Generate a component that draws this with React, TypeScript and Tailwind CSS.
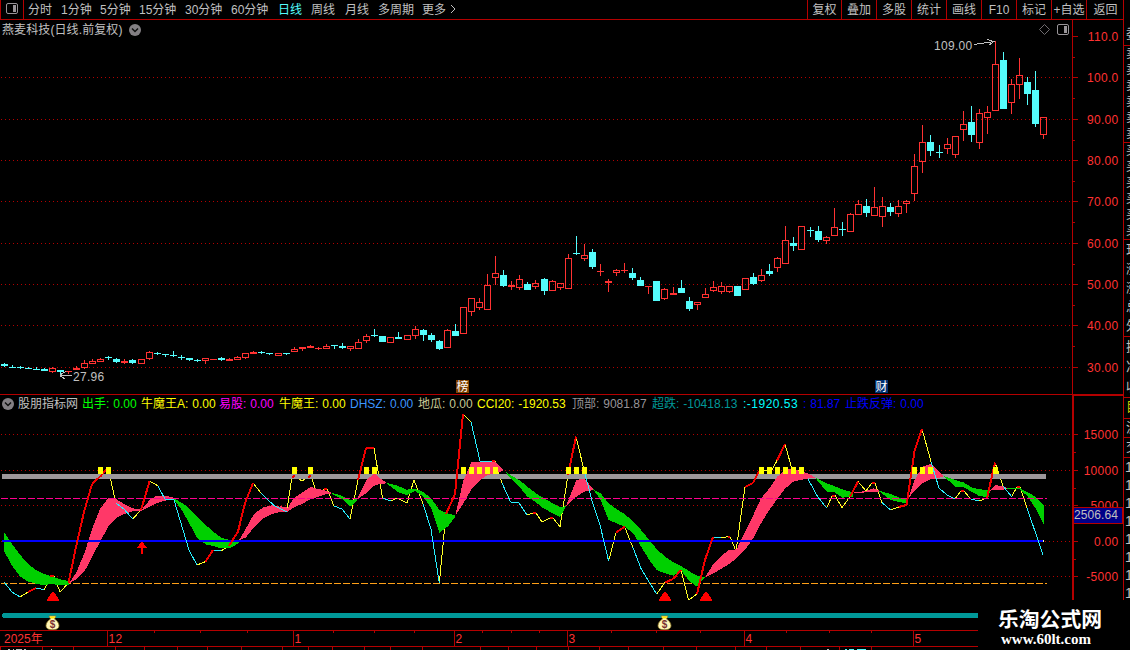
import React from "react";

type Candle = [x: number, high: number, top: number, bottom: number, low: number, up: 0 | 1];

const UP = "#ff3232";
const DOWN = "#54fcfc";
const LINE = "#b40000";
const TXT = "#c0c0c0";

const candles: Candle[] = [
  [4, 363, 364, 366, 367, 0], [12, 365, 367, 368, 368, 0], [20, 366, 367, 368, 369, 0], [28, 367, 368, 369, 369, 0],
  [36, 367, 369, 370, 370, 0], [44, 368, 369, 371, 371, 0], [52, 367, 368, 372, 373, 1], [60, 370, 370, 372, 374, 0],
  [68, 371, 371, 372, 374, 1], [76, 366, 368, 370, 370, 1], [84, 360, 363, 368, 369, 1], [92, 359, 361, 364, 364, 1],
  [100, 358, 359, 362, 362, 1], [108, 356, 357, 358, 360, 0], [116, 358, 359, 362, 363, 0], [124, 359, 361, 363, 364, 1],
  [132, 359, 360, 363, 364, 0], [141, 359, 359, 364, 364, 1], [149, 351, 352, 359, 360, 1], [157, 352, 353, 354, 355, 0],
  [165, 354, 354, 355, 357, 0], [173, 351, 355, 356, 357, 0], [181, 355, 357, 358, 360, 0], [189, 358, 358, 360, 361, 0],
  [197, 359, 360, 361, 362, 0], [205, 358, 358, 361, 364, 1], [213, 359, 359, 360, 360, 1], [221, 357, 358, 360, 361, 0],
  [229, 358, 359, 361, 361, 1], [237, 356, 357, 360, 360, 1], [245, 353, 353, 358, 359, 1], [253, 351, 352, 354, 354, 1],
  [261, 351, 352, 353, 354, 0], [269, 353, 353, 354, 355, 0], [278, 353, 353, 356, 356, 1], [286, 353, 353, 354, 355, 0],
  [294, 347, 349, 352, 352, 1], [302, 347, 347, 349, 351, 1], [310, 345, 346, 348, 348, 1], [318, 347, 348, 349, 350, 1],
  [326, 344, 346, 349, 349, 1], [334, 345, 345, 346, 349, 0], [342, 343, 346, 348, 349, 0], [350, 346, 346, 349, 351, 1],
  [358, 339, 342, 349, 349, 1], [366, 334, 336, 341, 343, 1], [374, 329, 335, 336, 337, 0], [382, 336, 336, 342, 342, 0],
  [390, 337, 337, 343, 343, 1], [398, 332, 337, 339, 339, 0], [407, 335, 335, 340, 340, 1], [415, 326, 329, 336, 339, 1],
  [423, 329, 330, 335, 341, 0], [431, 333, 335, 340, 342, 0], [439, 340, 341, 349, 350, 0], [447, 329, 330, 348, 348, 1],
  [455, 324, 331, 336, 336, 0], [463, 307, 307, 334, 334, 1], [471, 298, 298, 312, 316, 1], [479, 298, 302, 308, 310, 1],
  [487, 274, 285, 310, 310, 1], [495, 256, 273, 278, 285, 1], [503, 270, 275, 286, 287, 0], [511, 281, 285, 287, 290, 1],
  [519, 275, 279, 288, 290, 1], [527, 282, 284, 290, 290, 0], [535, 280, 283, 287, 289, 1], [544, 278, 279, 291, 295, 0],
  [552, 280, 281, 291, 291, 1], [560, 283, 283, 288, 290, 1], [568, 254, 258, 289, 289, 1], [576, 236, 253, 254, 255, 0],
  [584, 244, 255, 259, 261, 1], [592, 249, 252, 267, 269, 0], [600, 264, 271, 272, 276, 1], [608, 279, 281, 283, 292, 1],
  [616, 269, 270, 273, 276, 1], [624, 263, 270, 271, 273, 1], [632, 268, 273, 278, 280, 0], [640, 277, 280, 286, 286, 0],
  [648, 286, 286, 287, 294, 1], [656, 281, 281, 301, 301, 0], [664, 288, 289, 299, 300, 1], [673, 287, 293, 295, 295, 1],
  [681, 280, 288, 293, 293, 0], [689, 297, 301, 309, 311, 0], [697, 302, 302, 305, 310, 1], [705, 288, 294, 298, 298, 1],
  [713, 281, 287, 291, 292, 1], [721, 282, 286, 292, 294, 1], [729, 286, 286, 292, 293, 1], [737, 286, 286, 296, 296, 0],
  [745, 278, 278, 290, 290, 1], [753, 273, 277, 284, 285, 0], [761, 269, 275, 281, 282, 1], [769, 264, 271, 274, 276, 0],
  [777, 257, 258, 268, 272, 1], [785, 226, 240, 264, 264, 1], [793, 237, 243, 246, 251, 0], [801, 226, 226, 250, 250, 1],
  [810, 227, 230, 231, 237, 0], [818, 226, 231, 240, 242, 0], [826, 236, 237, 241, 244, 1], [834, 208, 227, 236, 236, 1],
  [842, 222, 229, 230, 236, 0], [850, 213, 214, 232, 232, 1], [858, 200, 204, 215, 215, 1], [866, 199, 206, 213, 217, 0],
  [874, 187, 207, 216, 216, 1], [882, 197, 206, 217, 227, 1], [890, 203, 207, 212, 216, 0], [898, 200, 206, 214, 217, 1],
  [906, 200, 201, 204, 213, 1], [914, 154, 166, 194, 201, 1], [922, 125, 142, 162, 173, 1], [930, 135, 142, 151, 156, 0],
  [939, 145, 152, 153, 158, 0], [947, 138, 144, 149, 154, 1], [955, 136, 136, 155, 158, 1], [963, 111, 124, 130, 141, 1],
  [971, 106, 122, 135, 142, 0], [979, 109, 113, 143, 149, 1], [987, 106, 112, 118, 134, 1], [995, 41, 64, 111, 111, 1],
  [1003, 52, 60, 109, 109, 0], [1011, 79, 84, 103, 114, 1], [1019, 58, 75, 85, 99, 1], [1027, 77, 82, 94, 105, 0],
  [1035, 71, 90, 124, 127, 0], [1043, 117, 117, 135, 139, 1],
];

function CandleShape({ c }: { c: Candle }) {
  const [x, high, top, bottom, low, up] = c;
  const color = up ? UP : DOWN;
  const hollow = up === 1 && bottom - top > 2;
  return (
    <g fill={color}>
      {top > high && <rect x={x} y={high} width={1} height={top - high} />}
      {low > bottom && <rect x={x} y={bottom} width={1} height={low - bottom} />}
      {hollow ? (
        <rect x={x - 2.5} y={top + 0.5} width={6} height={bottom - top - 1} fill="none" stroke={color} />
      ) : (
        <rect x={x - 3} y={top} width={7} height={bottom - top} />
      )}
    </g>
  );
}

type Tone = "y" | "c" | "r";
// Each entry is a vertex plus the tone of the segment that ends there.
const cci: [number, number, Tone][] = [
  [4, 582, "c"], [12, 592, "c"], [20, 597, "c"], [28, 592, "y"], [36, 588, "r"], [44, 589.5, "c"], [48, 583, "y"],
  [50, 576, "y"], [54, 576, "r"], [57, 584, "y"], [60, 592, "y"], [68.5, 583, "y"], [76, 547, "r"], [84, 512, "r"], [92, 484, "r"],
  [101, 475.7, "r"], [107, 469, "r"], [110.6, 479, "y"], [115.7, 503, "y"], [124, 509, "c"], [132.6, 519, "c"],
  [141, 510, "y"], [149.6, 481, "r"], [157.6, 485.6, "y"], [165, 499, "c"], [174, 500, "c"], [189, 550, "c"],
  [197, 565, "c"], [205.6, 561.6, "y"], [213, 550, "r"], [221, 551, "c"], [229, 546, "y"], [238, 531.6, "r"],
  [245, 503, "r"], [253, 483, "r"], [261, 493, "y"], [274, 505.6, "c"], [286.6, 512, "c"], [292, 477, "y"],
  [295, 476, "r"], [302, 481, "y"], [308, 477, "y"], [311, 476, "r"], [318, 497, "y"], [324, 489, "y"], [327, 489, "r"],
  [334, 506, "y"], [342, 509, "c"], [350, 519, "c"], [358, 480, "y"], [366, 448, "r"], [374, 448, "r"],
  [382.6, 498, "y"], [390.6, 501, "c"], [397, 498, "y"], [407, 503, "y"], [414, 480, "y"], [423, 504, "y"],
  [431, 529, "c"], [439.3, 583, "c"], [446, 514, "y"], [455, 494, "r"], [463, 414, "r"], [471, 422, "y"],
  [480, 461, "c"], [492, 461, "c"], [495, 461, "r"], [502, 483, "y"], [510.6, 502, "c"], [519, 503, "c"],
  [527, 515, "c"], [533, 513, "y"], [536, 513, "r"], [542, 522, "y"], [550, 518, "y"], [553, 518, "r"], [560, 526.6, "y"],
  [568, 475, "y"], [576, 436.6, "r"], [584, 470, "y"], [592.6, 503, "c"], [600, 525, "c"], [608.6, 561, "c"],
  [616, 532.6, "y"], [624.6, 526.6, "r"], [632.6, 546.6, "y"], [641, 568.6, "c"], [656.6, 594, "c"], [665, 582.6, "y"],
  [673, 579, "r"], [681, 570, "r"], [688.6, 600, "y"], [697, 594, "y"], [705, 560, "r"], [713, 537, "r"],
  [721, 538, "c"], [728, 536.6, "y"], [730, 537, "r"], [736, 551, "y"], [745, 487, "y"], [753, 483, "r"],
  [759, 471, "r"], [772, 470, "y"], [777, 460.6, "y"], [785, 444, "r"], [792.6, 471.6, "y"], [801, 470, "y"],
  [808, 479, "y"], [817.6, 496.6, "c"], [826.6, 508, "c"], [832, 496, "y"], [835, 495.6, "r"], [842, 507.6, "y"],
  [850, 496.6, "y"], [858, 481.6, "r"], [866, 491, "y"], [872, 483, "y"], [875, 483, "r"], [882, 502.6, "y"],
  [890.6, 510, "c"], [898.6, 507, "y"], [906.6, 505, "r"], [914.6, 450.6, "r"], [922, 429, "r"], [931, 461.6, "y"],
  [939, 488, "c"], [947, 495, "c"], [955, 499, "c"], [961, 491, "y"], [964, 491, "r"], [970.6, 499, "y"],
  [979, 501, "c"], [987, 498, "y"], [995, 462.6, "r"], [1003, 486, "y"], [1011.6, 496.6, "c"], [1017, 487, "y"],
  [1020, 487, "r"], [1027, 508, "y"], [1043, 554.6, "c"],
];

const toneColor: Record<Tone, string> = { y: "#ffff28", c: "#28f0ff", r: "#f00000" };

function Segments({ tone }: { tone: Tone }) {
  const d = cci
    .slice(1)
    .map(([x, y, t], i) => (t === tone ? `M${cci[i][0]} ${cci[i][1]}L${x} ${y}` : ""))
    .join("");
  return <path d={d} fill="none" stroke={toneColor[tone]} strokeWidth={tone === "r" ? 2 : 1} />;
}

// Ribbons are stored in third-pixel units relative to an origin: [x, upper edge, lower edge].
type Ribbon = { o: [number, number]; rise: boolean; p: [number, number, number][] };
const A: [number, number] = [0, 410];
const B: [number, number] = [280, 400];
const C: [number, number] = [550, 400];
const D: [number, number] = [830, 400];
const ribbons: Ribbon[] = [
  { o: A, rise: false, p: [[13, 368, 425], [37, 403, 468], [61, 435, 500], [85, 463, 515], [108, 480, 521], [132, 492, 526], [150, 498, 522], [180, 508, 525], [207, 513, 524]] },
  { o: A, rise: true, p: [[207, 520, 520], [229, 487, 508], [253, 430, 485], [277, 355, 440], [300, 297, 395], [325, 263, 350], [347, 267, 325], [373, 282, 312], [398, 295, 304], [425, 299, 302], [449, 270, 290], [470, 257, 280], [495, 257, 272], [522, 263, 268]] },
  { o: A, rise: false, p: [[522, 266, 269], [545, 278, 300], [568, 295, 340], [592, 320, 385], [617, 345, 403], [640, 365, 408], [664, 383, 415], [688, 390, 415], [716, 392, 400]] },
  { o: A, rise: true, p: [[716, 392, 392], [738, 355, 382], [762, 312, 352], [790, 292, 325], [815, 286, 312], [840, 290, 306], [862, 292, 304]] },
  { o: B, rise: true, p: [[0, 318, 337], [22, 325, 335], [43, 293, 322], [70, 275, 310], [92, 261, 297], [115, 267, 290], [137, 272, 283], [155, 278, 280]] },
  { o: B, rise: false, p: [[155, 278, 281], [187, 288, 297], [211, 300, 320], [232, 297, 300]] },
  { o: B, rise: true, p: [[232, 297, 297], [259, 240, 280], [283, 220, 257], [300, 235, 252], [320, 248, 250]] },
  { o: B, rise: false, p: [[320, 249, 250], [352, 257, 275], [380, 269, 286], [406, 266, 273], [430, 276, 290], [454, 295, 325], [478, 330, 398], [503, 340, 380], [526, 347, 350]] },
  { o: B, rise: true, p: [[526, 347, 347], [549, 245, 312], [574, 187, 268], [600, 187, 240], [622, 187, 225], [647, 186, 220], [670, 208, 212]] },
  { o: B, rise: false, p: [[670, 210, 210], [695, 228, 237], [718, 240, 260], [742, 260, 290], [765, 278, 305], [790, 294, 325], [815, 308, 338], [840, 322, 352], [858, 318, 318]] },
  { o: C, rise: true, p: [[48, 318, 318], [79, 240, 290], [103, 235, 275], [130, 268, 270]] },
  { o: C, rise: false, p: [[130, 268, 268], [152, 280, 300], [176, 310, 360], [200, 328, 370], [224, 342, 380], [250, 365, 400], [273, 390, 440], [298, 420, 480], [320, 447, 510], [345, 470, 520], [370, 487, 527], [393, 498, 512], [420, 515, 545], [441, 527, 560], [465, 532, 532]] },
  { o: C, rise: true, p: [[465, 532, 532], [490, 492, 520], [513, 468, 507], [537, 450, 492], [560, 448, 475], [585, 395, 450], [610, 345, 415], [633, 295, 370], [658, 265, 330], [682, 230, 297], [706, 208, 265], [730, 208, 245], [752, 213, 240], [778, 222, 235], [795, 233, 233]] },
  { o: C, rise: false, p: [[795, 233, 233], [830, 250, 275], [852, 258, 276], [877, 268, 293], [910, 278, 290]] },
  { o: D, rise: true, p: [[68, 278, 280], [108, 273, 277], [132, 265, 276], [147, 272, 275]] },
  { o: D, rise: false, p: [[147, 272, 274], [182, 282, 300], [206, 292, 306], [230, 297, 310]] },
  { o: D, rise: true, p: [[235, 295, 295], [254, 240, 272], [277, 200, 250], [303, 192, 237], [320, 208, 235], [340, 228, 230]] },
  { o: D, rise: false, p: [[340, 228, 228], [376, 240, 260], [400, 247, 262], [425, 262, 275], [448, 268, 288], [475, 270, 292], [480, 272, 272]] },
  { o: D, rise: true, p: [[480, 272, 272], [495, 255, 270], [520, 260, 269], [532, 264, 267]] },
  { o: D, rise: false, p: [[532, 264, 267], [568, 263, 268], [592, 277, 288], [617, 290, 325], [641, 315, 372]] },
];

function ribbonPoints({ o, p }: Ribbon) {
  const at = (x: number, y: number) => `${(o[0] + x / 3).toFixed(2)},${(o[1] + y / 3).toFixed(2)}`;
  return [...p.map(([x, t]) => at(x, t)), ...p.slice().reverse().map(([x, , b]) => at(x, b))].join(" ");
}

const squares = [98, 106, 292, 308, 364, 372, 461, 469, 477, 485, 493, 566, 574, 582, 759, 767, 775, 783, 791, 799, 912, 920, 928, 993];
const priceTicks: [number, string][] = [[36, "110.0"], [77, "100.0"], [119, "90.00"], [160, "80.00"], [201, "70.00"], [243, "60.00"], [284, "50.00"], [325, "40.00"], [367, "30.00"]];
const cciTicks: [number, string][] = [[434, "15000"], [470, "10000"], [505, "5000"], [541, "0.00"], [576, "-5000"]];

const num = "font-['Liberation_Sans'] text-[12px] [letter-spacing:0.3px]";

function GridLine({ y }: { y: number }) {
  return <path d={`M1 ${y + 0.5}H1072`} stroke={LINE} strokeDasharray="1 3" />;
}

function AxisLabel({ y, children }: { y: number; children: string }) {
  return (
    <text x={1118.5} y={y + 5} textAnchor="end" fill={UP} className={num}>
      {children}
    </text>
  );
}

function PriceChart() {
  return (
    <svg className="block h-[374px] w-[1123px]" viewBox="0 20 1123 374" shapeRendering="crispEdges">
      {priceTicks.slice(1).map(([y]) => <GridLine key={y} y={y} />)}
      {candles.map((c) => <CandleShape key={c[0]} c={c} />)}
      <rect x={1072} y={20} width={1} height={374} fill={LINE} />
      {priceTicks.map(([y, label], i) => (
        <g key={y}>
          <rect x={1073} y={y} width={5} height={1} fill={LINE} />
          {i < 8 && <rect x={1073} y={y + 21} width={2} height={1} fill={LINE} />}
          <AxisLabel y={y}>{label}</AxisLabel>
        </g>
      ))}
      <text x={934} y={50} fill={TXT} className={num}>109.00</text>
      <path d="M974 44.5L994 41.5M987 39.5L994 41.5L989 45" fill="none" stroke={TXT} />
      <text x={73} y={381} fill={TXT} className={num}>27.96</text>
      <path d="M60 375.500H72M66 371.500L60.500 374.500V376L65 379" fill="none" stroke={TXT} />
      <rect x={456} y={380} width={13} height={13} fill="#804000" />
      <text x={456.500} y={391} fill="#fff" className="font-['Noto_Sans_CJK_SC'] text-[12px]">榜</text>
      <rect x={875} y={380} width={13} height={13} fill="#003070" />
      <text x={875.500} y={391} fill="#fff" className="font-['Noto_Sans_CJK_SC'] text-[12px]">财</text>
    </svg>
  );
}

function MoneyBag({ x }: { x: number }) {
  return (
    <g transform={`translate(${x} 615)`} shapeRendering="auto">
      <path d="M3 1H10L8.500 4C11 5.500 13 8 13 10.500C13 13.500 10.500 14.800 6.500 14.800S0 13.500 0 10.500C0 8 2 5.500 4.500 4Z" fill="#fff6b8" stroke="#8a7420" strokeWidth={0.8} />
      <path d="M3.500 1.500H9.500L8 3.500H5Z" fill="#ffe800" />
      <text x={6.500} y={13} textAnchor="middle" fill="#7a3030" className="font-['Liberation_Sans'] text-[10px] font-bold">$</text>
    </g>
  );
}

function IndicatorChart() {
  return (
    <svg className="block h-[235px] w-[1124px]" viewBox="0 395 1124 235" shapeRendering="crispEdges">
      {cciTicks.map(([y]) => <GridLine key={y} y={y} />)}
      <Segments tone="y" />
      <path d="M2 474.500H1045V478.500H2Z" fill="#9c979b" stroke="#9c979b" />
      <path d="M1 583.500H1047" stroke="#ffa018" strokeDasharray="7 2" />
      {ribbons.map((r, i) => <polygon key={i} points={ribbonPoints(r)} fill={r.rise ? "#ff3868" : "#00d000"} />)}
      <path d="M1 498.500H1047" stroke="#ff0090" strokeDasharray="7 2" />
      <rect x={2} y={540} width={1041} height={2} fill="#0000ff" />
      <rect x={1043} y={540} width={1} height={2} fill="#ffffa0" />
      <Segments tone="c" />
      <Segments tone="r" />
      {squares.map((x) => <rect key={x} x={x} y={467} width={5} height={7} fill="#ffff00" />)}
      {[47, 659, 700].map((x) => <path key={x} d={`M${x + 5} 592H${x + 7}L${x + 12} 599.500V601H${x}V599.500Z`} fill="#ff0000" />)}
      <path d="M142 541.500L147 547.500H143V553.500H141V547.500H137Z" fill="#ff0000" />
      <path d="M2 614H3V613H978V618H3V617H2Z" fill="#009898" />
      <MoneyBag x={46} />
      <MoneyBag x={658} />
      <path d="M1072 395H1124V396H1074V600H1072Z" fill={LINE} />
      {cciTicks.map(([y, label], i) => (
        <g key={y}>
          <rect x={1074} y={y} width={4} height={1} fill={LINE} />
          {i < 4 && <rect x={1074} y={y + 18} width={2} height={1} fill={LINE} />}
          <AxisLabel y={y}>{label}</AxisLabel>
        </g>
      ))}
      <rect x={1074} y={507} width={49} height={17} fill={LINE} />
      <rect x={1074} y={508} width={48} height={15} fill="#000088" />
      <text x={1074} y={519} fill={TXT} className="font-['Liberation_Sans'] text-[12px] [letter-spacing:0.1px]">2506.64</text>
    </svg>
  );
}

const legend: [string, string, string][] = [
  ["股朋指标网", "w-[64px]", "text-[#c0c0c0]"],
  ["出手: 0.00", "w-[59px]", "text-[#00ff00]"],
  ["牛魔王A: 0.00", "w-[78px]", "text-[#ffff00]"],
  ["易股: 0.00", "w-[60px]", "text-[#ff00ff]"],
  ["牛魔王: 0.00", "w-[71px]", "text-[#ffff00]"],
  ["DHSZ: 0.00", "w-[68px]", "text-[#3c96ff]"],
  ["地瓜: 0.00", "w-[59px]", "text-[#c8c896]"],
  ["CCI20: -1920.53", "w-[95px]", "text-[#ffff00]"],
  ["顶部: 9081.87", "w-[80px]", "text-[#989498]"],
  ["超跌: -10418.13", "w-[91px]", "text-[#009898]"],
  [":-1920.53", "w-[60px] tracking-[0.5px]", "text-[#00ffff]"],
  [": 81.87", "w-[42px]", "text-[#0000ff]"],
  ["止跌反弹: 0.00", "w-[90px]", "text-[#0000ff]"],
];

const periods: [string, string][] = [
  ["分时", "w-[33px]"], ["1分钟", "w-[39px]"], ["5分钟", "w-[39px]"], ["15分钟", "w-[46px]"], ["30分钟", "w-[46px]"],
  ["60分钟", "w-[47px]"], ["日线", "w-[33px]"], ["周线", "w-[34px]"], ["月线", "w-[33px]"], ["多周期", "w-[44px]"], ["更多", "w-[28px]"],
];

const tools: [string, string][] = [
  ["复权", "w-[34px]"], ["叠加", "w-[35px]"], ["多股", "w-[35px]"], ["统计", "w-[35px]"], ["画线", "w-[35px]"],
  ["F10", "w-[35px]"], ["标记", "w-[35px]"], ["+自选", "w-[35px]"], ["返回", "w-[38px]"],
];

function PanelIcon() {
  return (
    <svg className="block h-[11px] w-[12px] shrink-0" viewBox="0 0 12 11">
      <rect x={0.5} y={0.5} width={11} height={10} rx={1.5} fill="none" stroke="#989498" />
      <rect x={7} y={2} width={3} height={7} fill="#989498" />
    </svg>
  );
}

function RoundChevron() {
  return (
    <svg className="block h-[12px] w-[12px] shrink-0" viewBox="0 0 12 12">
      <circle cx={6} cy={6} r={6} fill="#848084" />
      <path d="M3 4.500L6 7.500L9 4.500" fill="none" stroke="#101010" strokeWidth={1.5} />
    </svg>
  );
}

function TopBar() {
  return (
    <header className="flex h-[20px] w-[1124px] border-b border-[#b40000]">
      <div className="flex w-[24px] items-center justify-center border-x border-[#b40000] pb-[2px]">
        <PanelIcon />
      </div>
      <nav className="flex grow items-center pt-[1px] pl-[4px]">
        {periods.map(([label, w]) => (
          <span key={label} className={`${w} ${label === "日线" ? "text-[#54fcfc]" : ""}`}>{label}</span>
        ))}
        <svg className="mb-[2px] h-[10px] w-[6px]" viewBox="0 0 6 10">
          <path d="M1 1L5 5L1 9" fill="none" stroke={TXT} />
        </svg>
      </nav>
      {tools.map(([label, w]) => (
        <span key={label} className={`${w} flex shrink-0 items-center justify-center border-l border-[#b40000] pt-[1px]`}>{label}</span>
      ))}
    </header>
  );
}

const months: [number, string][] = [[107, "12"], [293, "1"], [454, "2"], [567, "3"], [744, "4"], [913, "5"]];
const weekTicks = [154, 200, 247, 333, 374, 414, 482, 511, 539, 611, 656, 700, 786, 829, 871];
const footTicks = [0, 42, 73, 115, 144, 177, 207, 241, 282, 308, 332, 364, 390, 422, 480, 508, 536, 568, 599, 628, 663, 696, 735, 766, 800, 839, 871];

function TimeAxis() {
  return (
    <svg className="block h-[20px] w-[978px]" viewBox="0 630 978 20" shapeRendering="crispEdges">
      <rect x={0} y={630} width={978} height={1} fill={LINE} />
      <rect x={0} y={646} width={978} height={1} fill={LINE} />
      <text x={4} y={643} fill={UP} className="font-['Liberation_Sans','Noto_Sans_CJK_SC'] text-[12px]">2025年</text>
      {months.map(([x, m]) => (
        <g key={x}>
          <rect x={x} y={630} width={1} height={16} fill={LINE} />
          <text x={x + 1.500} y={643} fill={UP} className={num}>{m}</text>
        </g>
      ))}
      {weekTicks.map((x) => <rect key={x} x={x} y={631} width={1} height={2} fill={LINE} />)}
      {footTicks.map((x) => <rect key={x} x={x} y={647} width={1} height={3} fill={LINE} />)}
      <path d="M8 649.500H10M13 649.500H14M16 649.500H22M24 649.500H26M51 649.500H52M827 649.500H829" stroke={TXT} />
      <path d="M845 649.500H847M849 649.500H854M857 649.500H866" stroke={DOWN} />
    </svg>
  );
}

function Sliver({ h, text, tone, size }: { h: string; text: string; tone?: string; size?: string }) {
  return (
    <div className={`${h} ${tone ?? ""} ${size ?? "text-[13px] leading-[18px]"} w-[7px] overflow-hidden border-b border-[#b40000] pl-[2px]`}>
      {text.split("").map((ch, i) => <div key={i} className="whitespace-nowrap">{ch}</div>)}
    </div>
  );
}

function SideStrip() {
  return (
    <aside className="flex h-[650px] w-[7px] shrink-0 flex-col overflow-hidden border-l border-[#b40000] pt-[25px]">
      <Sliver h="h-[21px]" text="委" />
      <Sliver h="h-[97px]" text="卖卖卖卖卖卖" size="text-[12px] leading-[16px]" />
      <Sliver h="h-[97px]" text="买买买买买买" size="text-[12px] leading-[16px]" />
      <Sliver h="h-[97px]" text="现涨涨总外" size="text-[13px] leading-[19px]" />
      <Sliver h="h-[61px]" text="换净收" size="text-[13px] leading-[20px]" />
      <Sliver h="h-[21px]" text="目" tone="text-[#c8c800]" />
      <Sliver h="h-[19px]" text="沪" />
      <Sliver h="h-[20px]" text="交" />
      <div className="w-[7px] overflow-hidden pl-[1px] font-['Liberation_Sans'] text-[14px] leading-[18px]">
        {Array.from({ length: 8 }, (_, i) => <div key={i}>1</div>)}
      </div>
    </aside>
  );
}

export default function App() {
  return (
    <div className="relative flex h-[650px] w-[1130px] overflow-hidden bg-black font-['Liberation_Sans','Noto_Sans_CJK_SC',sans-serif] text-[12px] leading-[16px] text-[#c0c0c0]">
      <div className="flex w-[1123px] shrink-0 flex-col">
        <TopBar />
        <section className="relative h-[375px] border-b border-[#b40000]">
          <PriceChart />
          <div className="absolute top-[2px] left-[2px] flex items-center gap-[6px]">
            <span className="whitespace-nowrap tracking-[0.1px]">燕麦科技(日线.前复权)</span>
            <RoundChevron />
          </div>
          <div className="absolute top-[4px] left-[1039px] flex items-center gap-[7px]">
            <svg className="h-[11px] w-[11px]" viewBox="0 0 11 11">
              <path d="M5.500 0.500L10.500 5.500L5.500 10.500L0.500 5.500Z" fill="none" stroke="#706c70" />
            </svg>
            <PanelIcon />
          </div>
        </section>
        <section className="relative h-[235px]">
          <IndicatorChart />
          <div className="absolute top-[1px] left-[2px] flex items-center whitespace-nowrap [word-spacing:0.6px]">
            <RoundChevron />
            <div className="ml-[4px] flex">
              {legend.map(([label, w, c], i) => (
                <span key={i} className={`${w} ${c} shrink-0`}>{label}</span>
              ))}
            </div>
          </div>
        </section>
        <TimeAxis />
      </div>
      <SideStrip />
      <div className="absolute right-0 bottom-0 flex h-[50px] w-[152px] flex-col bg-black pl-[20px] text-white">
        <span className="mt-[5px] whitespace-nowrap font-['Noto_Sans_CJK_SC'] text-[20.800px] leading-[26px] font-bold">乐淘公式网</span>
        <span className="mt-[1px] pl-[3px] font-['Liberation_Serif'] text-[15px] leading-[14px] font-bold">www.60lt.com</span>
      </div>
    </div>
  );
}
